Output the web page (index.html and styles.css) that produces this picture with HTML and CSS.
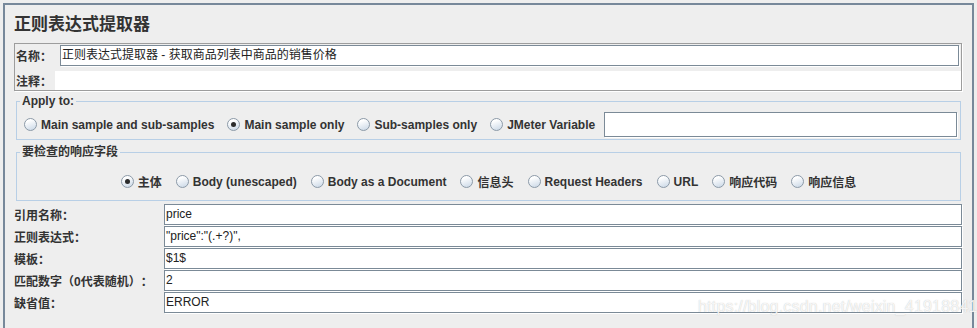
FILE: index.html
```html
<!DOCTYPE html>
<html lang="zh-CN">
<head>
  <meta charset="UTF-8" />
  <title>正则表达式提取器</title>
  <link rel="stylesheet" href="styles.css">
</head>
<body>

  <div class="frame">
    <h1 class="title">正则表达式提取器</h1>

    <!-- name / comment -->
    <div class="name-panel">
      <div class="name-row">
        <span class="name-label">名称：</span>
        <div class="field name-field">正则表达式提取器 - 获取商品列表中商品的销售价格</div>
      </div>
      <div class="comment-row">
        <span class="comment-label">注释：</span>
        <div class="comment-field"></div>
      </div>
    </div>

    <!-- Apply to -->
    <fieldset class="group apply-group">
      <legend>Apply to:</legend>
      <div class="radio-row">
        <label class="option"><span class="radio"></span>Main sample and sub-samples</label>
        <label class="option"><span class="radio checked"></span>Main sample only</label>
        <label class="option"><span class="radio"></span>Sub-samples only</label>
        <label class="option"><span class="radio"></span>JMeter Variable</label>
        <div class="field var-field"></div>
      </div>
    </fieldset>

    <!-- Field to check -->
    <fieldset class="group check-group">
      <legend>要检查的响应字段</legend>
      <div class="radio-row centered">
        <label class="option"><span class="radio checked"></span>主体</label>
        <label class="option"><span class="radio"></span>Body (unescaped)</label>
        <label class="option"><span class="radio"></span>Body as a Document</label>
        <label class="option"><span class="radio"></span>信息头</label>
        <label class="option"><span class="radio"></span>Request Headers</label>
        <label class="option"><span class="radio"></span>URL</label>
        <label class="option"><span class="radio"></span>响应代码</label>
        <label class="option"><span class="radio"></span>响应信息</label>
      </div>
    </fieldset>

    <!-- Settings -->
    <div class="settings">
      <span class="setting-label">引用名称：</span>
      <div class="field row-field">price</div>
      <span class="setting-label">正则表达式：</span>
      <div class="field row-field">"price":"(.+?)",</div>
      <span class="setting-label">模板：</span>
      <div class="field row-field">$1$</div>
      <span class="setting-label">匹配数字<span class="paren">（</span>0代表随机<span class="paren">）</span>：</span>
      <div class="field row-field">2</div>
      <span class="setting-label">缺省值：</span>
      <div class="field row-field">ERROR</div>
    </div>
  </div>

  <div class="watermark">https://blog.csdn.net/weixin_41918841</div>

</body>
</html>
```

FILE: styles.css
```css
/* Basic Reset */
* {
  margin: 0;
  padding: 0;
  box-sizing: border-box;
}

body {
  background-color: #eeeeee;
  font: bold 12px "Liberation Sans", "Noto Sans CJK SC", sans-serif;
  color: #333;
  height: 328px;
  overflow: hidden;
  text-spacing-trim: space-all;
  font-feature-settings: "chws" 0, "halt" 0;
}

/* Outer frame */
.frame {
  margin: 3px 3px 0 3px;
  height: 330px;
  border: 2px solid #77889a;
  border-bottom: none;
  padding: 10px 10px 0 9px;
}

.title {
  font-size: 17px;
  line-height: 20px;
  height: 20px;
  margin-bottom: 8px;
  color: #333;
}

/* Name / comment panel */
.name-panel {
  border: 1px solid #9d9d9d;
  box-shadow: 1px 1px 0 #fff;
  padding: 0 0 0 1px;
}

.name-row {
  display: flex;
  align-items: center;
  height: 22px;
  padding-right: 2px;
}

.name-label {
  width: 44px;
}

.field {
  background-color: #fff;
  border: 1px solid #7b8a97;
  box-shadow: 1px 1px 0 #fff;
  font-weight: normal;
  color: #222;
  padding-left: 1px;
  line-height: 19px;
  white-space: nowrap;
  overflow: hidden;
}

.name-field {
  flex: 1;
  height: 21px;
}

.comment-row {
  display: flex;
  align-items: center;
  margin-top: 5px;
  height: 19px;
}

.comment-label {
  width: 39px;
}

.comment-field {
  flex: 1;
  height: 19px;
  background-color: #fff;
}

/* Fieldsets */
.group {
  border: 1px solid #b8cfe6;
  margin: 3px 1px 0 2px;
  padding: 0 3px 2px 3px;
}

.group legend {
  padding: 0 2px;
  line-height: 14px;
}

.apply-group .radio-row {
  margin-top: 4px;
  padding-left: 4px;
  gap: 13px;
}

.check-group {
  margin-top: 4px;
  padding-bottom: 8px;
}

.check-group legend {
  line-height: 16px;
}

.check-group .radio-row {
  margin-top: 11px;
  height: 21px;
}

.radio-row {
  display: flex;
  align-items: center;
  gap: 14px;
}

.radio-row.centered {
  justify-content: center;
}

.option {
  display: flex;
  align-items: center;
  gap: 4px;
  white-space: nowrap;
}

/* Metal style radio */
.radio {
  position: relative;
  width: 13px;
  height: 13px;
  border-radius: 50%;
  border: 1px solid #8c9aa8;
  background: linear-gradient(160deg, #ffffff 20%, #c9d7e6 100%);
}

.radio.checked::after {
  content: "";
  position: absolute;
  left: 3px;
  top: 3px;
  width: 5px;
  height: 5px;
  border-radius: 50%;
  background-color: #2b2b2b;
}

.var-field {
  flex: 1;
  height: 25px;
  margin-left: -4px;
}

/* Settings grid */
.settings {
  display: grid;
  grid-template-columns: 150px 1fr;
  row-gap: 1px;
  margin-top: 3px;
  align-items: center;
}

.setting-label {
  white-space: nowrap;
}

.paren {
  display: inline-block;
  width: 12px;
  text-align: center;
}

.row-field {
  height: 21px;
  padding-left: 1px;
}

/* Watermark */
.watermark {
  position: absolute;
  left: 698px;
  top: 298px;
  font: normal 16px "Liberation Sans", sans-serif;
  color: rgba(255, 255, 255, 0.85);
  text-shadow: 0 0 1px rgba(150, 150, 150, 0.6);
  letter-spacing: 0.2px;
}
```
